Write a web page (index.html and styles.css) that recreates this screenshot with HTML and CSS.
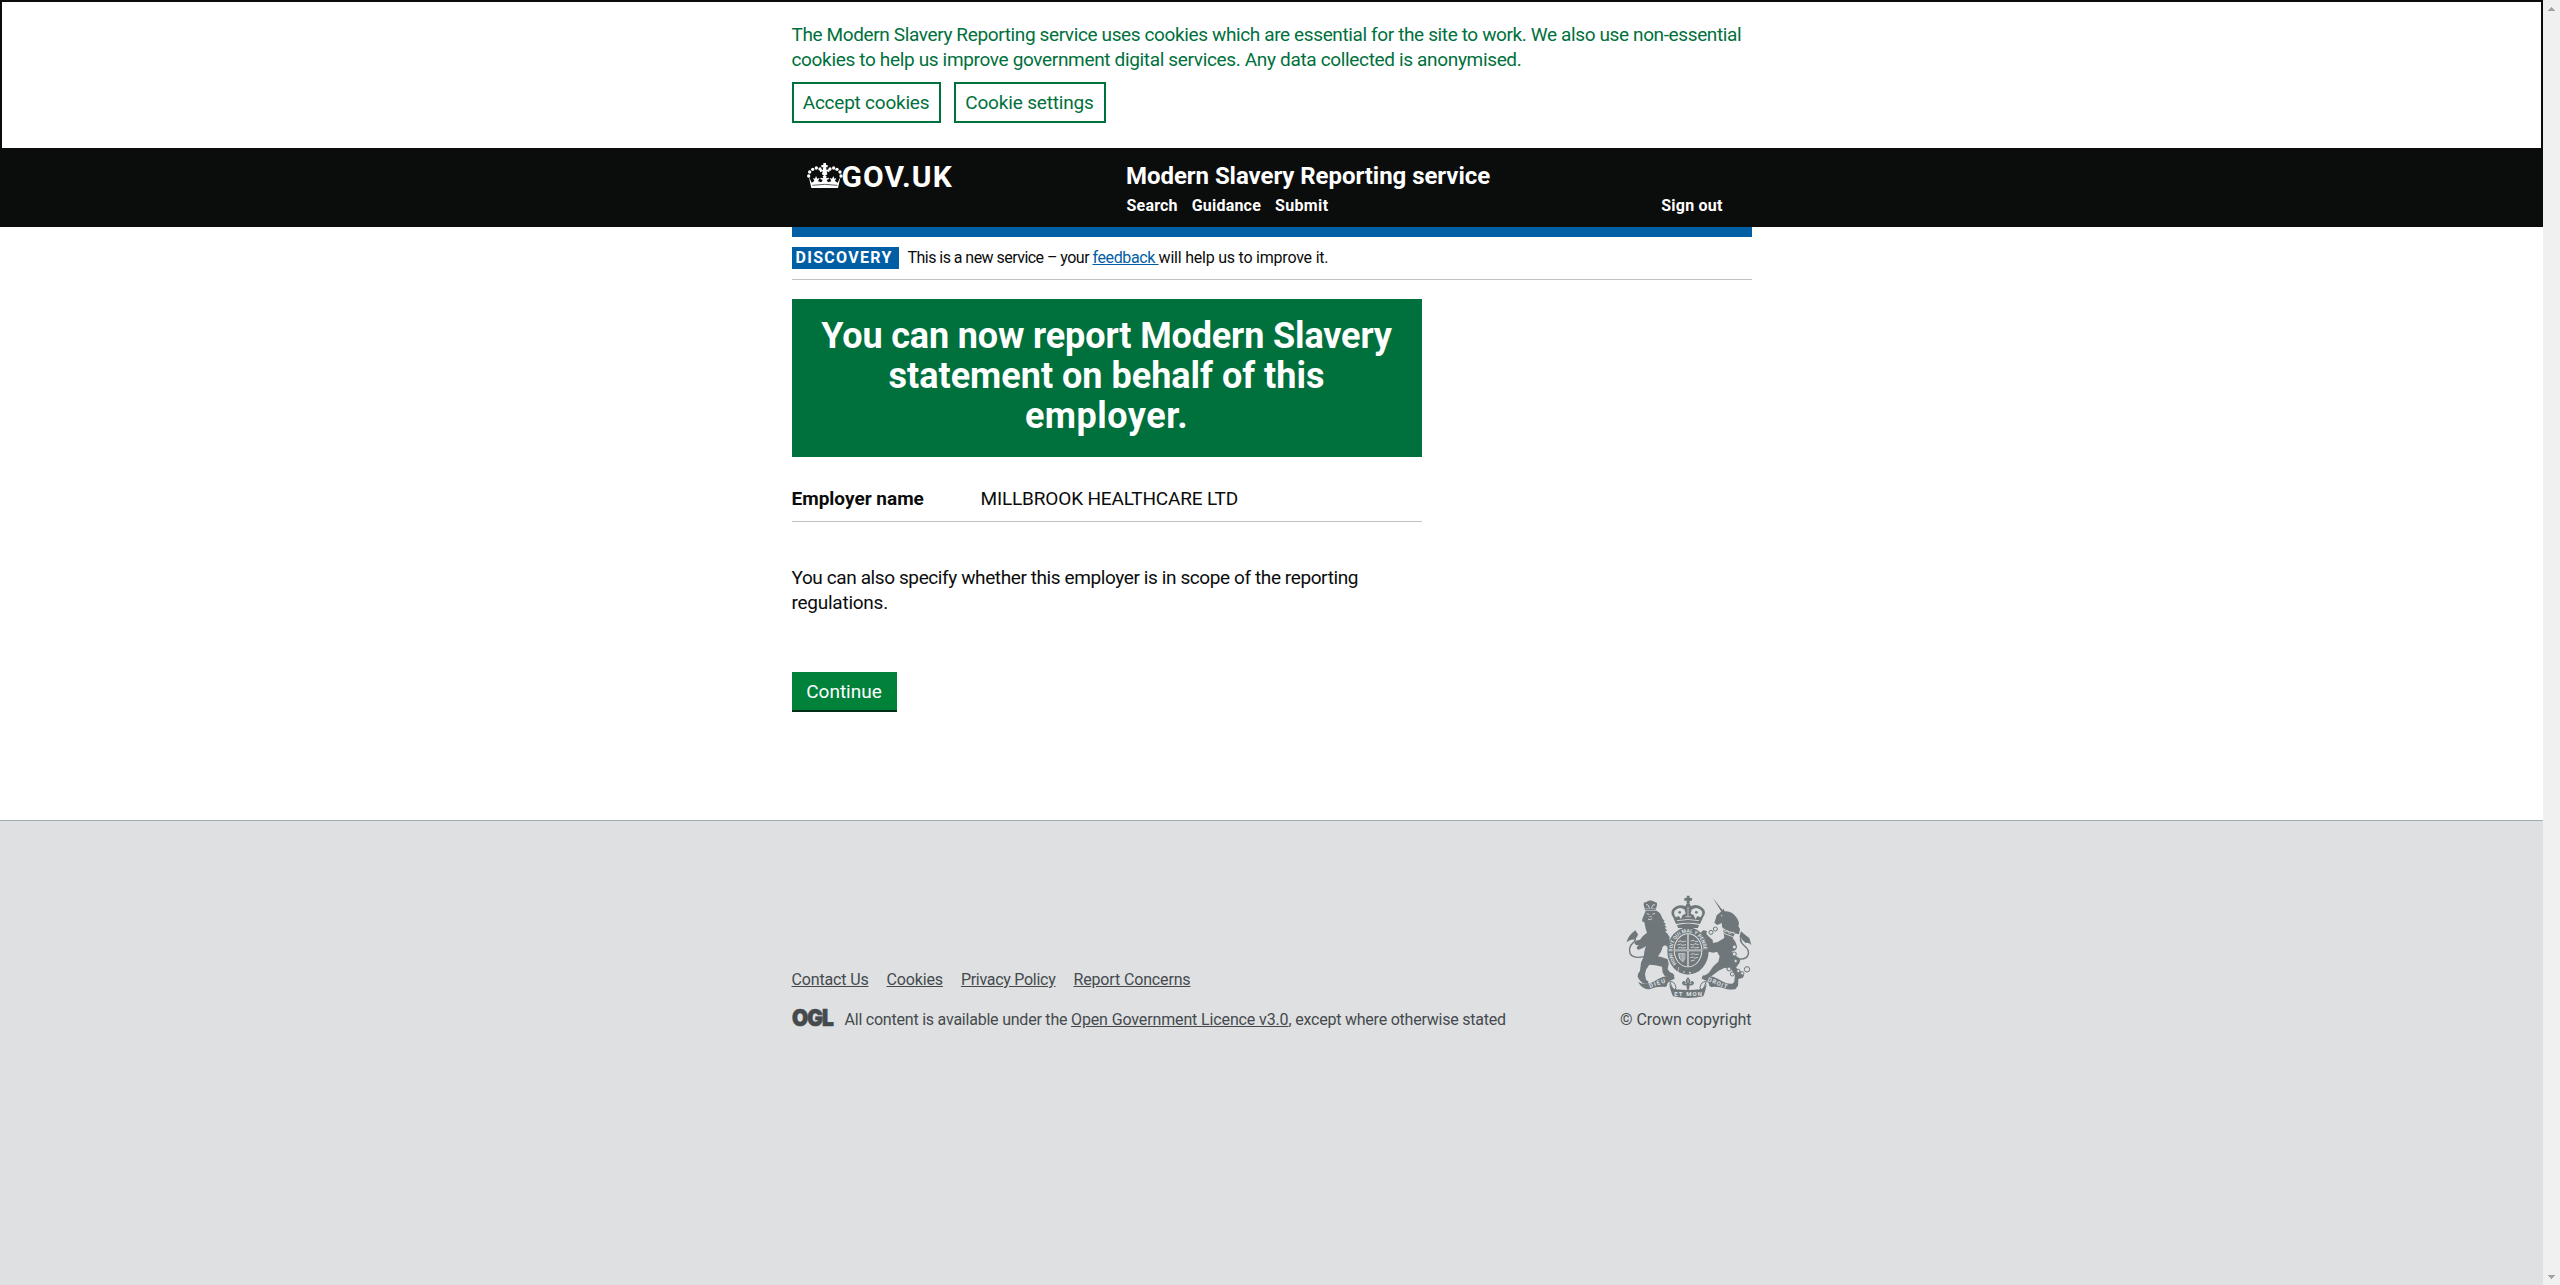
FILE: index.html
```
<!DOCTYPE html>
<html lang="en">
<head>
<meta charset="utf-8">
<title>Modern Slavery Reporting service</title>
<link rel="stylesheet" href="styles.css">
</head>
<body>
<div class="page">
  <div class="cookie-banner">
    <div class="container">
      <p class="cookie-text"><span class="cookie-line-1">The Modern Slavery Reporting service uses cookies which are essential for the site to work. We also use non-essential</span><br><span class="cookie-line-2">cookies to help us improve government digital services. Any data collected is anonymised.</span></p>
      <div class="cookie-actions">
        <a class="outline-button accept">Accept cookies</a>
        <a class="outline-button settings">Cookie settings</a>
      </div>
    </div>
  </div>

  <header class="header">
    <div class="container header-inner">
      <div class="logo">
        <svg class="crown" viewBox="0 0 126 102" width="42" height="34" fill="#fff">
          <path d="M58 15h8v6h5v7h-5l2 8 8-3v10l-8-3 2 9-8 6-8-6 2-9-8 3V33l8 3 2-8h-6v-7h6z"/>
          <circle cx="48" cy="33" r="5"/><circle cx="37" cy="30" r="5"/><circle cx="26" cy="34" r="5"/><circle cx="17" cy="42" r="5"/><circle cx="14" cy="54" r="5"/>
          <circle cx="78" cy="33" r="5"/><circle cx="89" cy="30" r="5"/><circle cx="99" cy="34" r="5"/><circle cx="108" cy="42" r="5"/><circle cx="111" cy="54" r="5"/>
          <path d="M14 55l9 19 8-5-4-9 6 2 3-8 4 8 7-2-5 10 10 3 4-7-7-3 1-4 8 2-2-7h12l-2 7 8-2 1 4-7 3 4 7 10-3-5-10 7 2 4-8 3 8 6-2-4 9 8 5 9-19-8 35H22z"/>
          <path d="M25 82q37-6 75 0" fill="none" stroke="#0b0c0c" stroke-width="2"/>
        </svg>
        <span class="logo-text">GOV.UK</span>
      </div>
      <div class="header-content">
        <div class="service-name">Modern Slavery Reporting service</div>
        <nav class="nav">
          <a>Search</a><a>Guidance</a><a class="nav-submit">Submit</a><a class="nav-signout">Sign out</a>
        </nav>
      </div>
    </div>
  </header>

  <main class="container main">
    <div class="phase-banner">
      <strong class="tag">DISCOVERY</strong>
      <span class="phase-text"><span class="phase-lead">This is a new service – your </span><a class="feedback">feedback </a><span class="phase-tail">will help us to improve it.</span></span>
    </div>
    <div class="column">
      <h1 class="panel"><span class="panel-line-1">You can now report Modern Slavery</span><br><span>statement on behalf of this</span><br><span class="panel-line-3">employer.</span></h1>
      <dl class="summary">
        <dt>Employer name</dt>
        <dd>MILLBROOK HEALTHCARE LTD</dd>
      </dl>
      <p class="body-text">You can also specify whether this employer is in scope of the reporting<br><span class="body-last">regulations.</span></p>
      <button class="button">Continue</button>
    </div>
  </main>

  <footer class="footer">
    <div class="container footer-inner">
      <div class="footer-meta">
        <div class="footer-links">
          <a>Contact Us</a><a>Cookies</a><a class="privacy">Privacy Policy</a><a>Report Concerns</a>
        </div>
        <div class="licence">
          <svg class="ogl" viewBox="0 0 42 18" width="42" height="18"><text x="0" y="17" textLength="41" lengthAdjust="spacingAndGlyphs">OGL</text></svg>
          <span><span>All content is available under the </span><a>Open Government Licence v3.0</a><span>, except where otherwise stated</span></span>
        </div>
      </div>
      <div class="copyright">
        <svg class="crest" viewBox="0 0 402 336" width="134" height="112" fill="#6f777b">
          <!-- small crown on the lion -->
          <path d="M66 48q-5-12 8-12 5-6 12-3 7-3 11 3 12 0 7 13l-3 12H69z"/>
          <circle cx="85" cy="34" r="3"/>
          <path d="M72 45q5-5 10 8M99 45q-5-5-10 8" fill="none" stroke="#dee0e2" stroke-width="3"/>
          <path d="M68 57q16-4 34 0" fill="none" stroke="#dee0e2" stroke-width="1.5"/>
          <!-- lion -->
          <path d="M71 62l33 0q10 5 14 15l4 10 6 5-4 3 8 7-5 2 7 8-6 1 8 9-7 1 8 9 6 10-1 8 8 9-5 10 5 12-3 5-8-4-2-11-7-5-7 3-6 16-9 14 12 3 17 6 3 13-3 16 6 9 11 5 3 7-10 3-18-2-7-11-2-18-20-4-18-2-10 15-3 14 3 16 8 6-4 7-13-2-10-9-6-11 1-8 6-10 3-24 8-18 3-20 4-12-9 6-13 5-6-3 2-7 6-4-9 1-6-6 4-8 13-3 8-10 13-11-4-12-4-19-7-3 1-7z"/>
          <path d="M74 71l8 2M91 73l8-3M82 80h7M78 87q8 5 13-1" fill="none" stroke="#dee0e2" stroke-width="2.5"/>
          <path d="M66 200q-40 8-43-16-2-14 9-24 13-10 5-26" fill="none" stroke="#6f777b" stroke-width="4"/>
          <path d="M14 157q4-20 26-36l8 12q-2 12-14 16-8-2-20 8z"/>
          <!-- large crown -->
          <path d="M194 17h9v7h7v8h-7v9h-9v-9h-7v-8h7z"/>
          <path d="M194 41h9l4 8q18-10 35 5 13 12 2 26l-10 22q-36-8-72 0l-9-21q-11-16 3-28 17-12 34-4z"/>
          <path d="M158 62q14-14 30-3l3 12-9 4-5 12-7-9-8 4q-9-10-4-20zM239 62q-14-14-30-3l-3 12 9 4 5 12 7-9 8 4q9-10 4-20z" fill="#dee0e2"/>
          <path d="M198 50v30M190 80h17" stroke="#dee0e2" stroke-width="2"/>
          <circle cx="173" cy="67" r="4"/><circle cx="223" cy="67" r="4"/>
          <path d="M165 92q33-7 66 0" fill="none" stroke="#dee0e2" stroke-width="2.5"/>
          <!-- garter and shield -->
          <path d="M165 105q33-9 66 0l-3 9h-60z"/>
          <ellipse cx="198" cy="183" rx="62" ry="71"/>
          <ellipse cx="198" cy="181" rx="43" ry="51" fill="#dee0e2"/>
          <ellipse cx="198" cy="181" rx="40" ry="48"/>
          <path d="M198 133v96M158 181h80" stroke="#dee0e2" stroke-width="5"/>
          <path d="M198 133v96M158 181h80" stroke="#6f777b" stroke-width="1.5"/>
          <path d="M168 155l9-3 3 4 12-3M166 165l10-3 4 4 12-2M168 174l8-2 5 2 11-1M206 153l10-2 4 4 8-1M205 163l9 2 5-4 11 3M206 173l8-2 6 3 11-2M206 193l9-2 5 3 10-2M205 203l9-2 5 4 9-3M206 213l12-3" fill="none" stroke="#dee0e2" stroke-width="2.5"/>
          <path d="M169 191h20q2 17-6 25-13-9-14-25zM173 191v16M177 191v20M181 191v22M185 191v20" fill="none" stroke="#dee0e2" stroke-width="2"/>
          <circle cx="186" cy="246" r="2.5" fill="#dee0e2"/><circle cx="204" cy="248" r="2.5" fill="#dee0e2"/>
          <path d="M142 240q28 24 62 15 25-2 43-18M170 231l-3 19" fill="none" stroke="#dee0e2" stroke-width="2"/>
          <!-- unicorn -->
          <path d="M273 24l30 38-5 3z"/>
          <path d="M284 76l12-10 8-10 4 8q18-1 29 11 12 11 14 26l-2 8 5 8-3 16-17-4-14-5-19-10-2-15-13 6-9-7 3-8z"/>
          <path d="M303 112l12 10 23 10-6 12 8 11 5 14-3 10-13 6 12 12 15 10-4 12-10 14 12 9 12 13-3 8-14 4-1 20-8 11-20 1 10-14 7-11 2-20-12-16-19-5-18 9-20 15-13 10-13-2 3-8 13-8 14-20 15-14 4-16-8-14-11 3-14-3-8-8-6-9-2-12 4-1 2-11-8-6-5-11 7-6 11 2-2 9 8 8 11 10 1 9 14-3 20-12z"/>
          <circle cx="299" cy="77" r="2" fill="#dee0e2"/>
          <path d="M294 107q18 20 43 21M289 118q18 16 44 22" fill="none" stroke="#dee0e2" stroke-width="2.5"/>
          <path d="M294 111l4 8 7-2 4 9 8-2 4 7 9-3" fill="none" stroke="#dee0e2" stroke-width="2"/>
          <path d="M342 206q32 6 37-14 3-13-12-25-19-16-7-31" fill="none" stroke="#6f777b" stroke-width="4"/>
          <path d="M352 141l5-17q13 12 25 20l6 21q-8-8-17-6-12-8-14-17z"/>
          <g fill="#dee0e2" stroke="#6f777b" stroke-width="3">
            <circle cx="280" cy="117" r="6"/><circle cx="267" cy="127" r="6"/><circle cx="337" cy="171" r="6"/><circle cx="337" cy="192" r="6"/><circle cx="341" cy="213" r="5"/><circle cx="321" cy="237" r="6"/><circle cx="331" cy="252" r="6"/><circle cx="349" cy="243" r="5"/><circle cx="361" cy="250" r="5"/><circle cx="375" cy="238" r="8"/>
          </g>
          <path id="garter" d="M164 222A47 56 0 1 1 232 222" fill="none"/>
          <text class="garter-text"><textPath href="#garter">HONI SOIT QUI MAL Y PENSE</textPath></text>
          <!-- motto ribbon -->
          <path d="M48 276q25 12 49-2 22-16 56-18 4 2 5 10-24 8-23 21l-5 4q-25-2-45 6-22 5-37-21zM349 276q-25 12-49-2-22-16-56-18-4 2-5 10 24 8 23 21l5 4q25-2 45 6 22 5 37-21z"/>
          <path d="M143 275q16-2 19 18l-7 13q-5-17-12-31zM253 275q-16-2-19 18l7 13q5-17 12-31z" fill="#dee0e2" stroke="#6f777b" stroke-width="3"/>
          <path d="M142 280q8 17 20 18 36 4 72 0 12-1 20-18-1 16-10 39-45 10-91 0-10-22-11-39z"/>
          <text class="motto-text" transform="translate(84 294) rotate(-20)" textLength="50">DIEU</text>
          <text class="motto-text" transform="translate(157 317)" textLength="83">ET MON</text>
          <text class="motto-text" transform="translate(256 273) rotate(23)" textLength="62">DROIT</text>
          <!-- fleur emblem -->
          <path d="M198 261l7 10-2 7q9-10 13 0-1 10-13 8l-2 13h-6l-2-13q-12 2-13-8 4-10 13 0l-2-7z"/>
          <path d="M198 268v10M188 280h6M203 280h6" stroke="#dee0e2" stroke-width="2"/>
        </svg>
        <a class="copyright-text">© Crown copyright</a>
      </div>
    </div>
  </footer>
</div>
<div class="scrollbar">
  <svg width="7" height="4" viewBox="0 0 7 4"><path d="M0 4V3h1V2h1V1h1V0h1v1h1v1h1v1h1v1z"/></svg>
  <svg width="7" height="4" viewBox="0 0 7 4"><path d="M0 0v1h1v1h1v1h1v1h1V3h1V2h1V1h1V0z"/></svg>
</div>
</body>
</html>
```
FILE: styles.css
```
* { box-sizing: border-box; }
html, body { height: 100%; }
body {
  margin: 0;
  display: flex;
  height: 1285px;
  overflow: hidden;
  background: #fff;
  color: #0b0c0c;
  font: 400 19px/25px Roboto, "Liberation Sans", sans-serif;
}
p, h1, dl, dd { margin: 0; }
.page { flex: 1; display: flex; flex-direction: column; }
.container { width: 960px; margin: 0 auto; }

.cookie-banner { height: 148px; padding-top: 20px; border: 2px solid #0b0c0c; border-bottom: 0; color: #00703c; }
.cookie-text { white-space: nowrap; }
.cookie-line-1 { letter-spacing: -0.376px; }
.cookie-line-2 { letter-spacing: -0.34px; }
.cookie-actions { display: flex; gap: 13px; margin-top: 10px; }
.outline-button { height: 41px; border: 2px solid #00703c; line-height: 37px; text-align: center; white-space: nowrap; }
.accept { width: 149px; letter-spacing: -0.229px; }
.settings { width: 152px; letter-spacing: -0.165px; }

.header { height: 79px; background: #0b0c0c; color: #fff; font-weight: 700; }
.header-inner { display: flex; }
.logo { display: flex; width: 335px; padding: 10px 0 0 12px; }
.logo-text { margin: 4px 0 0 -4px; font-size: 30px; line-height: 30px; letter-spacing: 1.1px; }
.header-content { flex: 1; padding-top: 13px; }
.service-name { font-size: 24px; line-height: 30px; letter-spacing: -0.05px; margin-left: -0.5px; }
.nav { display: flex; gap: 14px; margin-top: 5px; font-size: 16px; line-height: 20px; letter-spacing: 0.2px; }
.nav-submit { letter-spacing: 0.35px; }
.nav-signout { margin: 0 29px 0 auto; }

.main { height: 593px; border-top: 10px solid #005ea5; }
.phase-banner { display: flex; align-items: center; gap: 9px; height: 43px; border-bottom: 1px solid #bfc1c3; font-size: 16px; line-height: 22px; }
.tag { width: 107px; height: 22px; padding-left: 4px; background: #005ea5; color: #fff; letter-spacing: 1.3px; }
.phase-text { letter-spacing: -0.373px; white-space: pre; }
.phase-lead { letter-spacing: -0.54px; }
.phase-tail { letter-spacing: -0.22px; }
.feedback { color: #005ea5; text-decoration: underline; }
.column { width: 630px; }
.panel { margin-top: 19px; height: 158px; padding-top: 17px; background: #00703c; color: #fff; text-align: center; font-size: 36px; line-height: 40px; font-weight: 700; }
.panel-line-1 { letter-spacing: -0.145px; }
.panel-line-3 { letter-spacing: 0.5px; }
.summary { display: flex; margin-top: 29px; padding-bottom: 10px; border-bottom: 1px solid #bfc1c3; }
.summary dt { width: 189px; font-weight: 700; }
.summary dd { letter-spacing: -0.16px; }
.body-text { margin-top: 43px; letter-spacing: -0.398px; white-space: nowrap; }
.body-last { letter-spacing: -0.25px; }
.button { display: block; width: 105px; height: 40px; margin-top: 57px; padding: 1px 0 0; border: 0; border-bottom: 2px solid #002d18; background: #00823b; color: #fff; font: inherit; line-height: 37px; }

.footer { flex: 1; padding-top: 69px; border-top: 1px solid #a1acb2; background: #dee0e2; color: #454a4d; font-size: 16px; line-height: 20px; }
.footer-inner { display: flex; justify-content: space-between; align-items: flex-end; }
.footer a { text-decoration: underline; }
.footer-links { display: flex; gap: 18px; margin-bottom: 20px; letter-spacing: -0.15px; }
.footer-links .privacy { letter-spacing: -0.28px; }
.licence { display: flex; gap: 11px; letter-spacing: -0.22px; white-space: pre; }
.licence a { letter-spacing: -0.13px; }
.ogl { margin-top: -1px; overflow: visible; }
.ogl text { font: 900 23px Inter, sans-serif; letter-spacing: -1px; fill: #454a4d; stroke: #454a4d; stroke-width: 0.7px; }
.copyright { display: flex; flex-direction: column; align-items: flex-end; width: 134px; }
.crest { margin: 0 -4px 8px 0; }
.footer .copyright-text { text-decoration: none; letter-spacing: -0.058px; white-space: nowrap; }
.garter-text { font: 700 15px Roboto, sans-serif; fill: #dee0e2; }
.motto-text { font: 700 18px Roboto, sans-serif; fill: #dee0e2; }

.scrollbar { display: flex; flex-direction: column; justify-content: space-between; align-items: center; width: 17px; padding: 7px 0 6px; background: #f0f0f0; }
.scrollbar path { fill: #a3a3a3; }
```
